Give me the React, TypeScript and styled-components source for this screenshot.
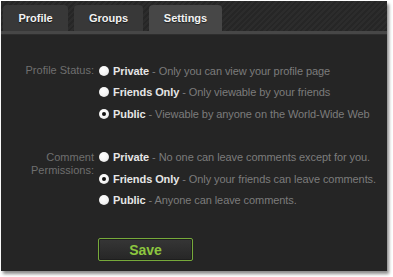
import React from "react";
import styled, { createGlobalStyle } from "styled-components";

const Global = createGlobalStyle`
  html, body { margin: 0; padding: 0; background: #ffffff; }
  body { font-family: "Liberation Sans", Arial, sans-serif; }
`;

const Page = styled.div`
  width: 393px;
  height: 277px;
  padding: 1px 0 0 1px;
  box-sizing: border-box;
`;

const Panel = styled.div`
  width: 386px;
  height: 270px;
  background: #252525;
  box-shadow: 2px 3px 3px rgba(0, 0, 0, 0.45);
  display: flex;
  flex-direction: column;
`;

const TabBar = styled.div`
  height: 30px;
  display: flex;
  align-items: flex-end;
  gap: 6px;
  padding-left: 2px;
  background: repeating-linear-gradient(
    135deg,
    #262626 0px,
    #262626 2px,
    #2c2c2c 2px,
    #2c2c2c 4px
  );
`;

const Tab = styled.div<{ $active?: boolean; $w: number }>`
  height: 26px;
  width: ${(p) => p.$w}px;
  border-radius: 4px 4px 0 0;
  background: ${(p) => (p.$active ? "#474747" : "#383838")};
  color: #f2f2f2;
  font-weight: bold;
  font-size: 11px;
  display: flex;
  align-items: center;
  justify-content: center;
  padding-bottom: 1px;
  box-sizing: border-box;
  text-shadow: 0 1px 1px rgba(0, 0, 0, 0.6);
`;

const Strip = styled.div`
  height: 3px;
  background: #474747;
  border-bottom: 1px solid #2e2e2e;
`;

const Content = styled.div`
  padding: 25px 0 0 0;
  display: flex;
  flex-direction: column;
  gap: 22px;
`;

const Section = styled.div`
  display: grid;
  grid-template-columns: 93px 1fr;
  column-gap: 5px;
`;

const Label = styled.div`
  text-align: right;
  color: #6f6f6f;
  font-size: 11px;
  line-height: 13px;
  padding-top: 4px;
`;

const Options = styled.div`
  display: flex;
  flex-direction: column;
`;

const Option = styled.div`
  height: 21.5px;
  display: flex;
  align-items: center;
  gap: 4px;
  font-size: 11px;
  white-space: nowrap;
  letter-spacing: -0.08px;
`;

const Radio = styled.span<{ $checked?: boolean }>`
  width: 10px;
  height: 10px;
  border-radius: 50%;
  background: radial-gradient(circle at 40% 35%, #ffffff 0%, #f4f4f4 55%, #cfcfcf 100%);
  display: inline-flex;
  align-items: center;
  justify-content: center;
  flex: none;
  &::after {
    content: "";
    width: 4px;
    height: 4px;
    border-radius: 50%;
    background: ${(p) => (p.$checked ? "#111" : "transparent")};
  }
`;

const Name = styled.span`
  color: #e6e6e6;
  font-weight: bold;
`;

const Desc = styled.span`
  color: #7c7c7c;
`;

const ButtonRow = styled.div`
  padding-left: 97px;
  margin-top: 27px;
`;

const SaveButton = styled.button`
  width: 95px;
  height: 23px;
  border: 1px solid #76a93a;
  border-radius: 2px;
  background: linear-gradient(#363636, #262626);
  color: #8cc63f;
  font-family: "Liberation Sans", Arial, sans-serif;
  font-weight: bold;
  font-size: 14px;
  padding: 0;
  box-shadow: inset 0 0 0 1px #1e1e1e;
`;

type Opt = { name: string; desc: string; checked?: boolean };

const profile: Opt[] = [
  { name: "Private", desc: "Only you can view your profile page" },
  { name: "Friends Only", desc: "Only viewable by your friends" },
  { name: "Public", desc: "Viewable by anyone on the World-Wide Web", checked: true },
];

const comments: Opt[] = [
  { name: "Private", desc: "No one can leave comments except for you." },
  { name: "Friends Only", desc: "Only your friends can leave comments.", checked: true },
  { name: "Public", desc: "Anyone can leave comments." },
];

function OptionList({ items }: { items: Opt[] }) {
  return (
    <Options>
      {items.map((o) => (
        <Option key={o.name}>
          <Radio $checked={o.checked} />
          <span>
            <Name>{o.name}</Name>
            <Desc> - {o.desc}</Desc>
          </span>
        </Option>
      ))}
    </Options>
  );
}

export default function App() {
  return (
    <>
      <Global />
      <Page>
        <Panel>
          <TabBar>
            <Tab $w={65}>Profile</Tab>
            <Tab $w={69}>Groups</Tab>
            <Tab $w={73} $active>
              Settings
            </Tab>
          </TabBar>
          <Strip />
          <Content>
            <Section>
              <Label>Profile Status:</Label>
              <OptionList items={profile} />
            </Section>
            <Section>
              <Label>
                Comment
                <br />
                Permissions:
              </Label>
              <OptionList items={comments} />
            </Section>
          </Content>
          <ButtonRow>
            <SaveButton>Save</SaveButton>
          </ButtonRow>
        </Panel>
      </Page>
    </>
  );
}
